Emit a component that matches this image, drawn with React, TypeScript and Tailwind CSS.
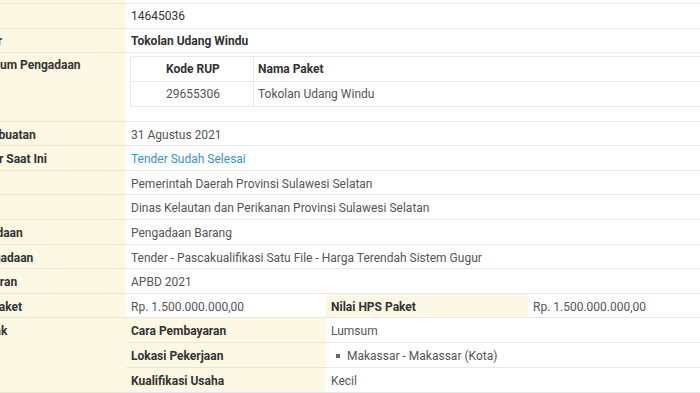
import React from "react";

const font = { fontFamily: "Roboto, 'Liberation Sans', sans-serif" };

function Label({ text, off, h, pt = "pt-[1px]" }: { text: string; off: string; h: string; pt?: string }) {
  return (
    <div className={`w-[126px] shrink-0 overflow-hidden bg-[#fcf8e3] border-b border-[#ece7d2] ${h} ${pt} flex items-start`}>
      <span className={`whitespace-nowrap font-bold text-[#333] leading-[24px] ${off}`}>{text}</span>
    </div>
  );
}

function Row({
  label,
  off,
  h,
  pt = "pt-[2px]",
  lpt = "pt-[1px]",
  children,
}: {
  label: string;
  off: string;
  h: string;
  pt?: string;
  lpt?: string;
  children: React.ReactNode;
}) {
  return (
    <div className="flex">
      <Label text={label} off={off} h={h} pt={lpt} />
      <div className={`flex-1 border-b border-[#e8e8e8] bg-white ${h} ${pt} pl-[5px] flex items-center text-[#555] whitespace-nowrap`}>
        {children}
      </div>
    </div>
  );
}

export default function App() {
  return (
    <div className="w-[700px] h-[393px] overflow-hidden bg-white text-[12px] leading-[16px]" style={font}>
      <div className="flex h-[4px]">
        <div className="w-[126px] bg-[#fcf8e3] border-b border-[#ece7d2]" />
        <div className="flex-1 border-b border-[#e8e8e8]" />
      </div>
      <Row label="Kode Tender" off="ml-[-76px]" h="h-[25px]" pt="pt-0" lpt="pt-0">
        <span className="text-[#333]">14645036</span>
      </Row>
      <Row label="Nama Tender" off="ml-[-70px]" h="h-[24px]" pt="pt-0" lpt="pt-0">
        <span className="font-bold text-[#333]">Tokolan Udang Windu</span>
      </Row>
      <div className="flex">
        <Label text="Rencana Umum Pengadaan" off="ml-[-68px]" h="h-[69px]" pt="pt-0" />
        <div className="flex-1 h-[69px] border-b border-[#e8e8e8] pl-[4px] pt-[3px]">
          <div className="border-l border-t border-[#e8e8e8]">
            <div className="flex h-[25px] border-b border-[#e8e8e8] items-stretch">
              <div className="w-[123px] border-r border-[#e8e8e8] pl-[35px] font-bold text-[#333] flex items-center">Kode RUP</div>
              <div className="flex-1 pl-[4px] font-bold text-[#333] flex items-center">Nama Paket</div>
            </div>
            <div className="flex h-[25px] border-b border-[#e8e8e8] text-[#555] items-stretch">
              <div className="w-[123px] border-r border-[#e8e8e8] pl-[35px] flex items-center">29655306</div>
              <div className="flex-1 pl-[4px] flex items-center">Tokolan Udang Windu</div>
            </div>
          </div>
        </div>
      </div>
      <Row label="Tanggal Pembuatan" off="ml-[-72px]" h="h-[24px]">
        31 Agustus 2021
      </Row>
      <Row label="Tahap Tender Saat Ini" off="ml-[-70px]" h="h-[25px]">
        <span className="text-[#3d91c8]">Tender Sudah Selesai</span>
      </Row>
      <Row label="Instansi" off="ml-[-70px]" h="h-[24px]">
        Pemerintah Daerah Provinsi Sulawesi Selatan
      </Row>
      <Row label="Satuan Kerja" off="ml-[-80px]" h="h-[25px]">
        Dinas Kelautan dan Perikanan Provinsi Sulawesi Selatan
      </Row>
      <Row label="Jenis Pengadaan" off="ml-[-70px]" h="h-[25px]">
        Pengadaan Barang
      </Row>
      <Row label="Metode Pengadaan" off="ml-[-71px]" h="h-[24px]">
        Tender - Pascakualifikasi Satu File - Harga Terendah Sistem Gugur
      </Row>
      <Row label="Tahun Anggaran" off="ml-[-71px]" h="h-[25px]">
        APBD 2021
      </Row>
      <div className="flex">
        <Label text="Nilai Pagu Paket" off="ml-[-67px]" h="h-[24px]" />
        <div className="flex flex-1 h-[24px] border-b border-[#e8e8e8] whitespace-nowrap">
          <div className="w-[200px] bg-white pl-[5px] pt-[2px] text-[#555] flex items-center">Rp. 1.500.000.000,00</div>
          <div className="w-[202px] bg-[#fcf8e3] pl-[5px] pt-[2px] font-bold text-[#333] flex items-center">Nilai HPS Paket</div>
          <div className="flex-1 bg-white pl-[5px] pt-[2px] text-[#555] flex items-center">Rp. 1.500.000.000,00</div>
        </div>
      </div>
      <div className="flex">
        <Label text="Jenis Kontrak" off="ml-[-67px]" h="h-[75px]" />
        <div className="flex-1 flex flex-col">
          <div className="flex h-[25px] border-b border-[#e8e8e8]">
            <div className="w-[200px] bg-[#fcf8e3] pl-[5px] pt-[2px] font-bold text-[#333] flex items-center">Cara Pembayaran</div>
            <div className="flex-1 pl-[5px] pt-[2px] text-[#555] flex items-center">Lumsum</div>
          </div>
          <div className="flex h-[25px] border-b border-[#e8e8e8]">
            <div className="w-[200px] bg-[#fcf8e3] pl-[5px] pt-[2px] font-bold text-[#333] flex items-center">Lokasi Pekerjaan</div>
            <div className="flex-1 pl-[10px] pt-[2px] text-[#555] flex items-center">
              <span className="inline-block w-[4px] h-[4px] bg-[#666] mr-[7px]" />
              <span>Makassar - Makassar (Kota)</span>
            </div>
          </div>
          <div className="flex h-[25px] border-b border-[#e8e8e8]">
            <div className="w-[200px] bg-[#fcf8e3] pl-[5px] pt-[2px] font-bold text-[#333] flex items-center">Kualifikasi Usaha</div>
            <div className="flex-1 pl-[5px] pt-[2px] text-[#555] flex items-center">Kecil</div>
          </div>
        </div>
      </div>
    </div>
  );
}
